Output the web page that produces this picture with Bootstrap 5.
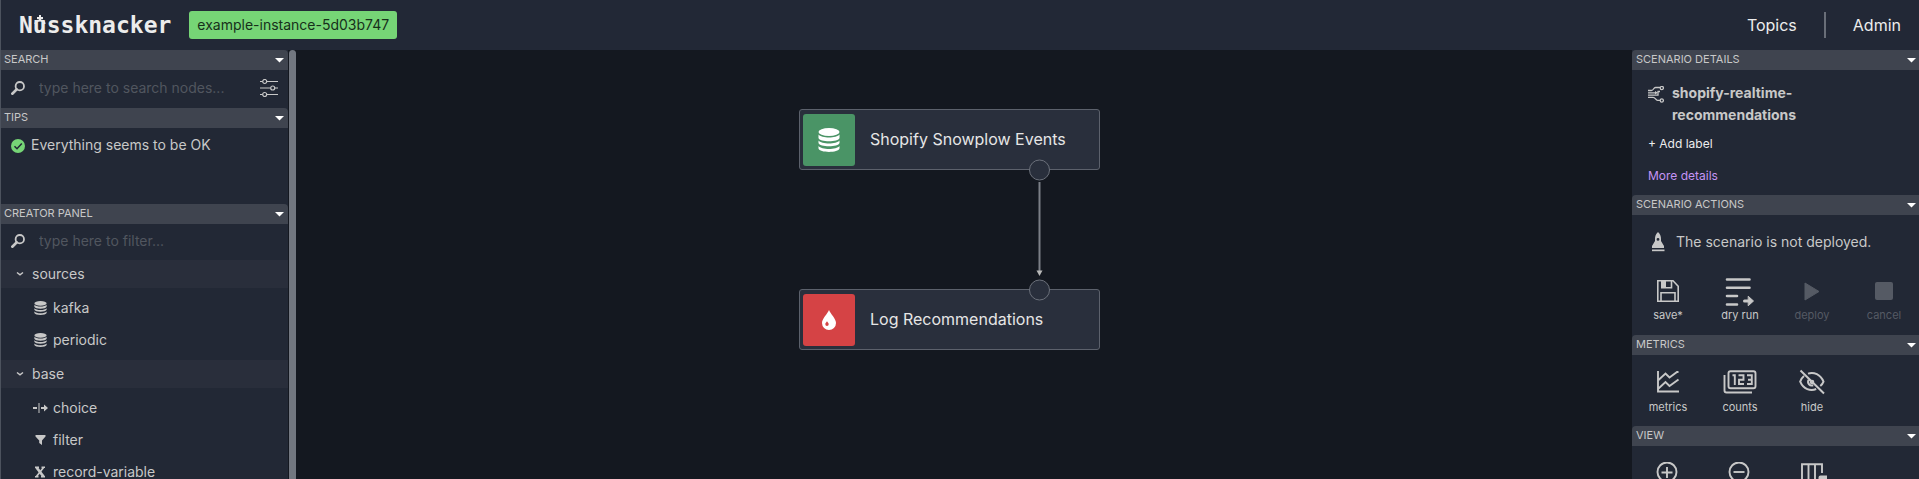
<!DOCTYPE html>
<html lang="en" data-bs-theme="dark">
<head>
<meta charset="utf-8">
<meta name="viewport" content="width=device-width, initial-scale=1">
<title>Nussknacker</title>
<link href="https://cdn.jsdelivr.net/npm/bootstrap@5.3.0/dist/css/bootstrap.min.css" rel="stylesheet">
<style>
  body { font-family: Inter, "Open Sans", sans-serif; font-size: 14px; line-height: 20px; color: #c8c8c8; background: #141820; }
  svg { display: block; flex: none; }
  .topbar { min-height: 50px; background: #222836; border-left: 1px solid #4c525d; padding: 0 18px; }
  .brand { font: 700 23px/26px "DejaVu Sans Mono", monospace; color: #ececec; }
  .brand:hover { color: #fff; }
  .brand-u { position: relative; }
  .brand-u svg { position: absolute; left: 0; top: 3px; }
  .instance { background: #76d576; color: #17301b; font-size: 14px; line-height: 20px; padding: 4px 8px; border-radius: 3px; margin-left: 18px; }
  .topnav a { color: #ededed; font-size: 16px; line-height: 24px; text-decoration: none; }
  .topnav .rule { width: 2px; height: 26px; background: #696e78; margin: 0 27px; }
  .left-panel { width: 296px; }
  .left-scroll { background: #222835; border-left: 1px solid #4c525d; width: 288px; }
  .thumb { width: 7px; background: #727780; border-radius: 4px 4px 0 0; margin-left: 1px; }
  .right-panel { width: 287px; background: #222835; }
  .sec-head { display: flex; align-items: center; justify-content: space-between; width: 100%; height: 20px; padding: 0 4px 2px; border: 0; background: #3f444f; color: #c8c8c8; font-size: 11px; line-height: 18px; text-align: left; }
  .sec-head svg { margin-top: 2px; }
  .left-scroll .sec-head { border-radius: 0 4px 0 0; padding-left: 3px; }
  .right-panel .sec-head { border-radius: 4px 0 0 0; padding-right: 3px; }
  .find { padding: 0 10px 2px; gap: 14px; }
  .find input { background: none; border: 0; outline: 0; color: #c8c8c8; font-size: 14px; line-height: 20px; padding: 0; min-width: 0; }
  .find input::placeholder { color: #51565f; opacity: 1; }
  .find-top { height: 38px; }
  .find-creator { height: 36px; }
  .tips { height: 76px; padding: 7px 10px; gap: 6px; }
  .group { display: flex; align-items: center; width: 100%; height: 28px; border: 0; background: #292e3b; color: #c8c8c8; padding: 0 15px 1px; gap: 8px; }
  .items { margin: 0; padding: 4px 0; list-style: none; }
  .items li { display: flex; align-items: center; height: 32px; padding-left: 31px; gap: 4px; }
  .icon-btn { display: flex; flex: none; flex-direction: column; align-items: center; gap: 1px; width: 72px; border: 0; background: none; color: #c8c8c8; padding: 0; font-size: 11px; line-height: 16px; }
  .icon-btn:disabled { color: #555a64; }
  .details { height: 125px; padding: 12px 16px 0; }
  .details h2 { font-size: 14px; line-height: 22px; font-weight: 700; margin: 0; color: #c8c8c8; }
  .plain { display: block; border: 0; background: none; padding: 0; color: #ededed; font-size: 12px; line-height: 20px; text-decoration: none; }
  .more { color: #c594f5; }
  .state { padding: 17px 16px 0; }
  .workspace { position: relative; }
  .flow-node { position: absolute; display: flex; align-items: center; width: 301px; height: 61px; padding: 3px; background: #292f3c; border: 1px solid #5c616c; border-radius: 3px; color: #e6e6e6; font-size: 16px; line-height: 24px; gap: 15px; }
  .node-label { padding-bottom: 2px; }
  .tile { width: 52px; height: 52px; border-radius: 3px; color: #fff; }
  .edge { position: absolute; }
</style>
</head>
<body class="vh-100 overflow-hidden d-flex flex-column">
<svg width="0" height="0" class="position-absolute" aria-hidden="true">
  <symbol id="caret" viewBox="0 0 9 5"><path d="M0 0h9L4.500 4.500z" fill="#fff"/></symbol>
  <symbol id="lens" viewBox="0 0 14 14"><circle cx="8.800" cy="5.200" r="4.200" fill="none" stroke="currentColor" stroke-width="1.800"/><path d="M5.800 8.300 1.300 12.700" stroke="currentColor" stroke-width="2.600" stroke-linecap="round"/></symbol>
  <symbol id="chev" viewBox="0 0 8 6"><path d="M1 1.500 4 3.800 7 1.500" fill="none" stroke="currentColor" stroke-width="1.500"/></symbol>
  <symbol id="db" viewBox="0 0 22 24"><ellipse cx="11" cy="4" rx="10.500" ry="4"/><path d="M.5 6.500c3 4 18 4 21 0v3.500c-1 4.300-20 4.300-21 0zM.5 12.500c3 4 18 4 21 0v2.500c-1 4.300-20 4.300-21 0zM.5 18c3 4 18 4 21 0v2.500c-1 4.500-20 4.500-21 0z"/></symbol>
</svg>

<header class="topbar d-flex align-items-center">
  <a href="#" class="brand text-decoration-none" aria-label="Nussknacker">N<span class="brand-u">u<svg width="14" height="10" viewBox="0 0 14 10"><path d="M2.500 9C2.500 6.500 4 5.500 7 5.500S11.500 6.500 11.500 9" fill="none" stroke="currentColor" stroke-width="2"/><path d="M7 0v6M4 3h6" stroke="currentColor" stroke-width="2"/></svg></span>ssknacker</a>
  <span class="instance">example-instance-5d03b747</span>
  <nav class="topnav d-flex align-items-center ms-auto"><a href="#">Topics</a><span class="rule"></span><a href="#">Admin</a></nav>
</header>

<div class="d-flex flex-grow-1 overflow-hidden">
  <aside class="left-panel d-flex flex-shrink-0">
    <div class="left-scroll overflow-hidden">
      <button class="sec-head">SEARCH<svg width="9" height="5"><use href="#caret"/></svg></button>
      <div class="find find-top d-flex align-items-center">
        <svg width="14" height="14"><use href="#lens"/></svg>
        <input class="flex-grow-1" type="text" aria-label="Search nodes" placeholder="type here to search nodes...">
        <svg width="18" height="18" viewBox="0 0 18 18" fill="none" stroke="currentColor" stroke-width="1.200"><path d="M0 2.500h2.500M7 2.500h11M0 9h10.500M15 9h3M0 15.500h2.500M7 15.500h11"/><circle cx="4.700" cy="2.500" r="2"/><circle cx="12.700" cy="9" r="2"/><circle cx="4.700" cy="15.500" r="2"/></svg>
      </div>
      <button class="sec-head">TIPS<svg width="9" height="5"><use href="#caret"/></svg></button>
      <div class="tips d-flex align-items-start">
        <svg class="mt-1" width="14" height="14" viewBox="0 0 14 14"><circle cx="7" cy="7" r="7" fill="#76d576"/><path d="m3.500 7.200 2.500 2.500L10.800 4.500" fill="none" stroke="#222835" stroke-width="1.500"/></svg>
        <span>Everything seems to be OK</span>
      </div>
      <button class="sec-head">CREATOR PANEL<svg width="9" height="5"><use href="#caret"/></svg></button>
      <div class="find find-creator d-flex align-items-center">
        <svg width="14" height="14"><use href="#lens"/></svg>
        <input class="flex-grow-1" type="text" aria-label="Filter components" placeholder="type here to filter...">
      </div>
      <button class="group"><svg width="8" height="6"><use href="#chev"/></svg>sources</button>
      <ul class="items">
        <li><svg width="17" height="14" fill="currentColor"><use href="#db"/></svg>kafka</li>
        <li><svg width="17" height="14" fill="currentColor"><use href="#db"/></svg>periodic</li>
      </ul>
      <button class="group"><svg width="8" height="6"><use href="#chev"/></svg>base</button>
      <ul class="items">
        <li><svg width="17" height="12" viewBox="0 0 17 12" fill="currentColor"><path d="M1 5h4v2H1zM6.500 1h1v10h-1zM9 5h3V2.500L16 6l-4 3.500V7H9z"/></svg>choice</li>
        <li><svg width="17" height="12" viewBox="0 0 17 12" fill="currentColor"><path d="M3.500 1h10v1.500L10 6.500V11l-2.800-2V6.500L3.500 2.500z"/></svg>filter</li>
        <li><svg width="17" height="12" viewBox="0 0 17 12" fill="none" stroke="currentColor"><path d="M4.500 1.500 11.500 10.500" stroke-width="2.800"/><path d="M11.500 1.500 4.500 10.500" stroke-width="1.800"/><path d="M3 1.200h4M9.500 1.200H13M3 10.800h3.500M9 10.800h4" stroke-width="1.400"/></svg>record-variable</li>
      </ul>
    </div>
    <div class="thumb"></div>
  </aside>

  <main class="workspace flex-grow-1 overflow-hidden">
    <div class="flow-node" style="left:503px;top:59px"><span class="tile d-flex align-items-center justify-content-center" style="background:#4a9466"><svg width="22" height="24" fill="currentColor"><use href="#db"/></svg></span><span class="node-label">Shopify Snowplow Events</span></div>
    <div class="flow-node" style="left:503px;top:239px"><span class="tile d-flex align-items-center justify-content-center" style="background:#d54345"><svg width="14" height="20" viewBox="0 0 14 20"><path d="M7 0c1.500 4 7 8.500 7 13a7 7 0 0 1-14 0C0 8.500 5.500 4 7 0z" fill="currentColor"/><path d="M5 11.300c.6 1 1.700 1.700 1.700 3a1.700 1.700 0 0 1-3.400 0c0-1.300 1.100-2 1.700-3z" fill="#d54345"/></svg></span><span class="node-label">Log Recommendations</span></div>
    <svg class="edge" style="left:732px;top:109px" width="22" height="142" viewBox="0 0 22 142"><g fill="#292f3c" stroke="#6b707a"><circle cx="11.500" cy="11" r="10"/><circle cx="11.500" cy="131" r="10"/></g><path d="M11.500 23v91" stroke="#7b7f87" stroke-width="2"/><path d="M8.500 111.500h6l-3 5.500z" fill="#b8b8b8"/></svg>
  </main>

  <aside class="right-panel flex-shrink-0 overflow-hidden">
    <button class="sec-head">SCENARIO DETAILS<svg width="9" height="5"><use href="#caret"/></svg></button>
    <div class="details">
      <div class="d-flex gap-2">
        <svg class="mt-1" width="16" height="17" viewBox="0 0 16 17" fill="none" stroke="currentColor" stroke-width="1.300"><path d="M0 4.500h3.500c2 0 2-3 4-3H12M0 6.800h7.500M0 9.100h10V5.500h2M0 11.300h5c2.500 0 2.500 3 4.500 3H12"/><circle cx="13.800" cy="2" r="1.600"/><circle cx="13.800" cy="14.500" r="1.600"/><path d="m7 5 3 1.800L7 8.500z" fill="currentColor" stroke="none"/></svg>
        <h2>shopify-realtime-<br>recommendations</h2>
      </div>
      <button class="plain mt-2">+ Add label</button>
      <a href="#" class="plain more mt-2 pt-1">More details</a>
    </div>
    <button class="sec-head">SCENARIO ACTIONS<svg width="9" height="5"><use href="#caret"/></svg></button>
    <div style="height:120px">
      <div class="state d-flex align-items-center gap-2">
        <svg width="20" height="20" viewBox="0 0 20 20" fill="currentColor"><path fill-rule="evenodd" d="M10 0c2.500 2.500 3 4.500 3 7v2l3 5v2H4v-2l3-5V7c0-2.500.5-4.500 3-7zm0 6a1.400 1.400 0 1 0 0 2.800A1.400 1.400 0 0 0 10 6z"/><path d="M4 17.500h12.500v1.700H4z"/></svg>
        <span>The scenario is not deployed.</span>
      </div>
      <div class="d-flex mt-4">
        <button class="icon-btn"><svg width="30" height="30" viewBox="0 0 30 30" fill="none" stroke="currentColor" stroke-width="1.600"><path d="M4.800 4.800H20l5.200 5.400v15H4.800zM8 25v-8.200h14V25M8.800 5v6.700h9.700V5"/><path d="M9 5h4v7H9z" fill="currentColor" stroke="none"/></svg>save*</button>
        <button class="icon-btn"><svg width="30" height="30" viewBox="0 0 30 30" fill="none" stroke="currentColor" stroke-width="2.600" stroke-linecap="round"><path d="M2 3.500h22.500M2 11.700h22.500M2 20h10M2 28.500h10"/><path d="M19.500 25H25" stroke-width="3"/><path d="m23.500 20.500 5 4.500-5 4.500z" fill="currentColor" stroke-width="1"/></svg>dry run</button>
        <button class="icon-btn" disabled><svg width="30" height="30" viewBox="0 0 30 30"><path d="m8 7 14 8.500L8 24z" fill="currentColor" stroke="currentColor" stroke-linejoin="round"/></svg>deploy</button>
        <button class="icon-btn" disabled><svg width="30" height="30"><rect x="6" y="6" width="18" height="18" rx="2" fill="currentColor"/></svg>cancel</button>
      </div>
    </div>
    <button class="sec-head">METRICS<svg width="9" height="5"><use href="#caret"/></svg></button>
    <div style="height:71px;padding-top:14px">
      <div class="d-flex">
        <button class="icon-btn"><svg width="34" height="29" viewBox="0 0 34 29" fill="none" stroke="currentColor" stroke-width="1.900"><path d="M7 2v20.500h21M7.500 11l7-6.500 4 4L26 3h1.500M7.500 19.500l7-6.500 4 4 9-6.500"/></svg>metrics</button>
        <button class="icon-btn"><svg width="34" height="29" viewBox="0 0 34 29" fill="none" stroke="currentColor" stroke-width="1.900"><rect x="5.500" y="2.300" width="27" height="17" rx="2"/><path d="M1.500 6v15.500q0 2 2 2H29"/><path d="M9.500 6.300h2.300V16M15.500 6.300h5v4.500h-4.500V15h5M24 6.300h4.800V15H24M25 10.700h3.800"/></svg>counts</button>
        <button class="icon-btn"><svg width="34" height="29" viewBox="0 0 34 29" fill="none" stroke="currentColor" stroke-width="2"><path d="M5.500 1.500 29 24.500M13 4.600c6-2 12.500 1 15.500 8-.7 1.800-1.800 3.300-3.200 4.400M9 7c-1.800 1.400-3 3.200-3.800 5.600 3.200 7.600 10.300 9.800 16 7.400M13.500 10.800c-1.500 3.500 1.200 6.500 4.700 5.400"/><circle cx="17" cy="13" r="1.300"/></svg>hide</button>
      </div>
    </div>
    <button class="sec-head">VIEW<svg width="9" height="5"><use href="#caret"/></svg></button>
    <div class="d-flex pt-3">
      <button class="icon-btn" aria-label="zoom in"><svg width="30" height="24" viewBox="0 0 30 24" fill="none" stroke="currentColor" stroke-width="1.900"><circle cx="14" cy="10" r="9.500"/><path d="M14 5v11M8.500 10.500h11"/></svg></button>
      <button class="icon-btn" aria-label="zoom out"><svg width="30" height="24" viewBox="0 0 30 24" fill="none" stroke="currentColor" stroke-width="1.900"><circle cx="14" cy="10" r="9.500"/><path d="M8.500 10h11"/></svg></button>
      <button class="icon-btn" aria-label="arrange"><svg width="30" height="24" viewBox="0 0 30 24" fill="none" stroke="currentColor" stroke-width="1.900"><path d="M5 24V2.200h20V11M11.500 2v22M18 2v22"/><path d="M21.500 17v-1.500q0-2 2-2H30V24h-2.500v-7z" fill="currentColor" stroke="none"/></svg></button>
    </div>
  </aside>
</div>
<script src="https://cdn.jsdelivr.net/npm/bootstrap@5.3.0/dist/js/bootstrap.bundle.min.js"></script>
</body>
</html>
